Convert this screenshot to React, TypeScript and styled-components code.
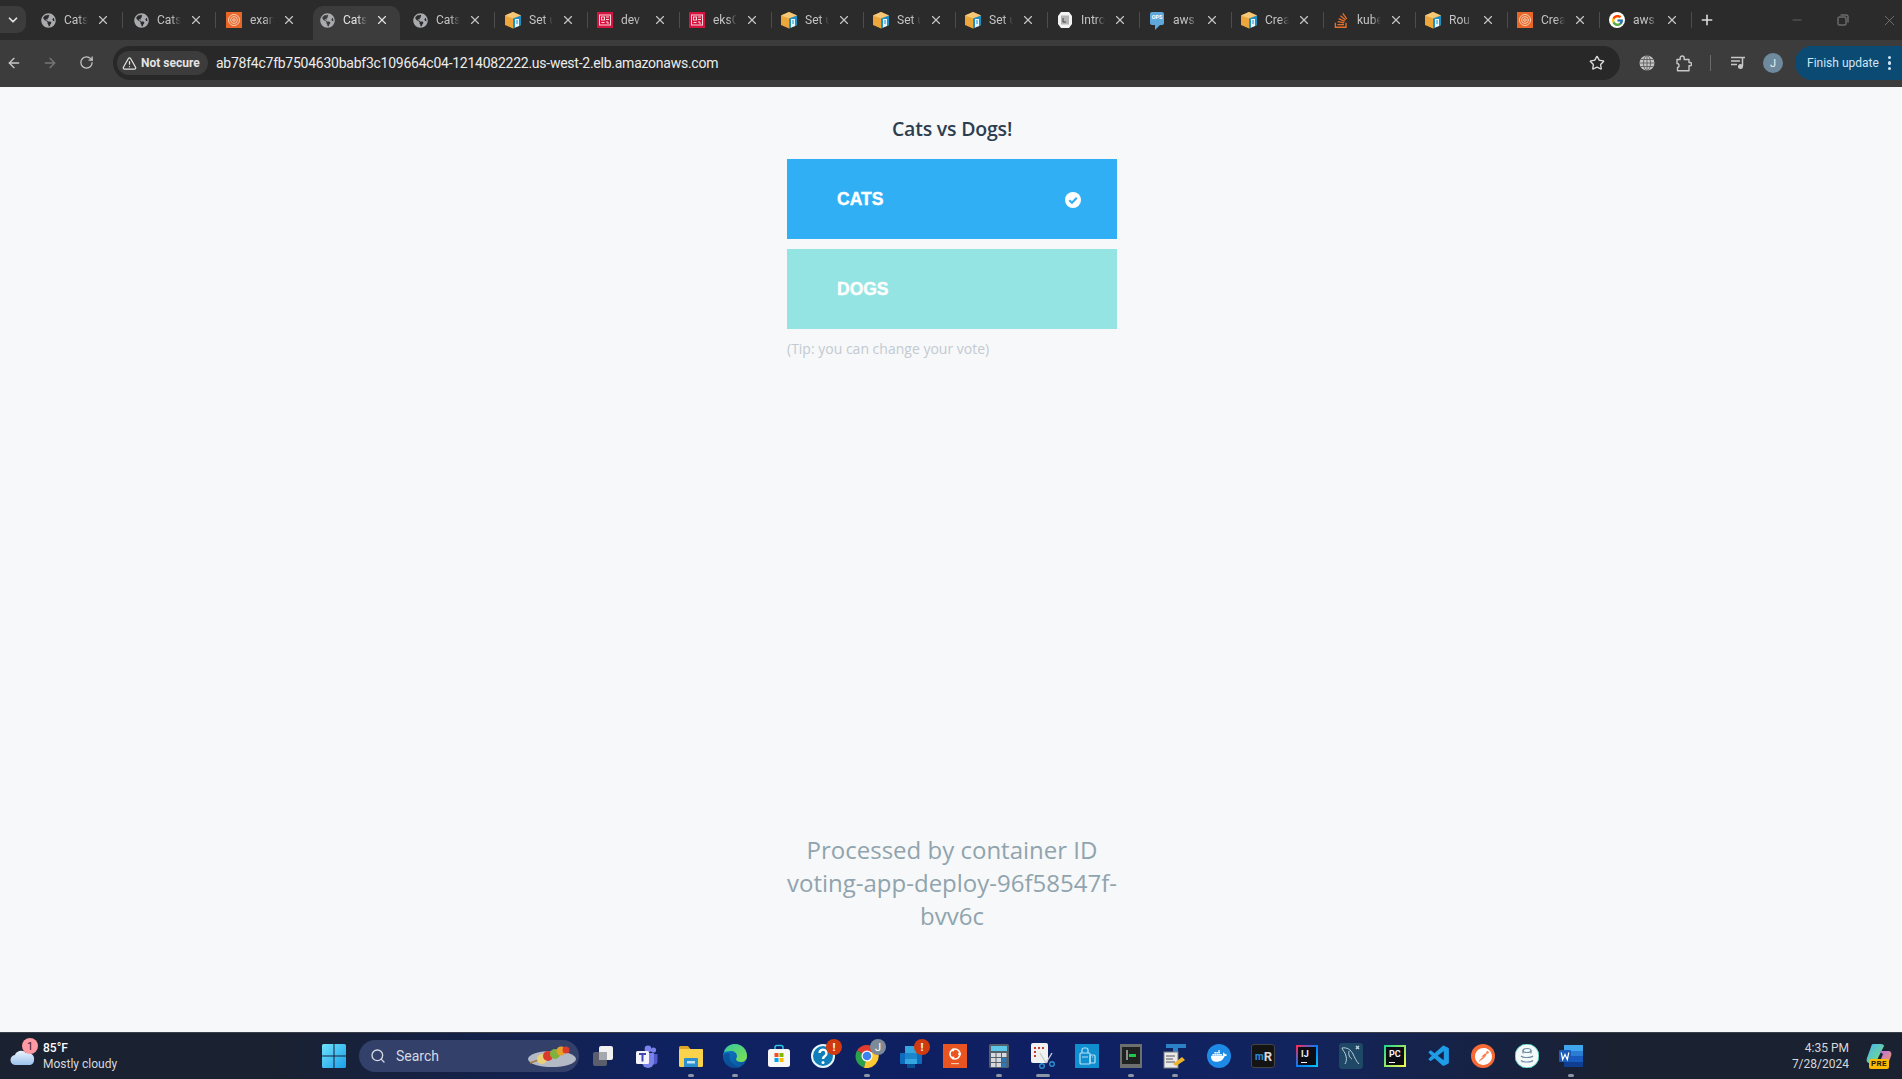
import React from "react";
import styled, { createGlobalStyle } from "styled-components";
import { FaGlobeAmericas, FaStackOverflow } from "react-icons/fa";
import { FcGoogle } from "react-icons/fc";
import { VscVscode } from "react-icons/vsc";
import { SiDocker, SiPostman } from "react-icons/si";
import {
  ArrowLeft, ArrowRight, RotateCw, TriangleAlert, Star, X, Plus, Minus, ChevronDown, Search,
} from "lucide-react";

const Global = createGlobalStyle`
  html, body { margin: 0; padding: 0; height: 100%; overflow: hidden; background: #f7f8f9; }
  #root { height: 1079px; display: flex; flex-direction: column; }
  * { box-sizing: border-box; }
`;

const chromeFont = `Roboto, "Liberation Sans", sans-serif`;
const pageFont = `"Open Sans", "Noto Sans", sans-serif`;

/* ---------- Tab strip ---------- */
const TabStrip = styled.div`
  height: 40px; background: #2b2b2b; display: flex; align-items: flex-start;
  font-family: ${chromeFont}; flex: none; position: relative;
`;
const TabSearch = styled.div`
  width: 26px; height: 27px; margin-top: 6px; margin-right: 8px; background: #3c3c3c;
  border-radius: 0 9px 9px 0; display: flex; align-items: center; justify-content: center; color: #e6e6e6; flex: none;
`;
const Tab = styled.div<{ $active?: boolean; $sep?: boolean }>`
  width: 92px; height: 34px; margin-top: 6px; position: relative; flex: none;
  display: flex; align-items: center; padding: 0 0 6px 6px; color: ${(p) => (p.$active ? "#e3e3e3" : "#c4c4c4")};
  &:nth-child(-n+6) { width: 93px; }
  ${(p) => p.$active && `&::before { content: ""; position: absolute; left: 0; top: 0; width: 87px; height: 34px; background: #3c3c3c; border-radius: 10px 10px 0 0; }`}
  ${(p) => p.$sep && `&::after { content: ""; position: absolute; left: 88px; top: 6px; width: 1px; height: 16px; background: #4d4d4d; }`}
`;
const Fav = styled.div`
  width: 16px; height: 16px; flex: none; position: relative; display: flex; align-items: center; justify-content: center; color: #a9abae;
`;
const TabTitle = styled.div`
  width: 24px; margin-left: 8px; font-size: 12px; white-space: nowrap; overflow: hidden; position: relative; flex: none;
  mask-image: linear-gradient(90deg, #000 60%, transparent 100%);
`;
const TabClose = styled.div`
  margin-left: 6.5px; width: 16px; height: 16px; display: flex; align-items: center; justify-content: center; position: relative; flex: none;
`;
const NewTab = styled.div`
  width: 24px; height: 24px; margin-top: 8px; color: #dcdcdc; display: flex; align-items: center; justify-content: center; flex: none;
`;
const WindowControls = styled.div`
  margin-left: auto; display: flex; gap: 20px; height: 40px; color: #8a8a8a; flex: none;
`;
const WinButton = styled.div`
  width: 26px; height: 40px; display: flex; align-items: center; justify-content: center;
`;

/* ---------- Toolbar ---------- */
const Toolbar = styled.div`
  height: 47px; background: #3c3c3c; display: flex; align-items: center; padding: 0 0 1px 0; flex: none; font-family: ${chromeFont};
`;
const NavButton = styled.div<{ $dim?: boolean }>`
  width: 36px; display: flex; justify-content: center; color: ${(p) => (p.$dim ? "#777" : "#c7c7c7")}; flex: none;
`;
const NavGroup = styled.div`
  display: flex; width: 113px; margin-left: -4px; flex: none;
`;
const Omnibox = styled.div`
  width: 1507px; height: 34px; margin-left: 4px; background: #282828; border-radius: 17px; display: flex; align-items: center; padding: 0 4px; flex: none;
`;
const SecurePill = styled.div`
  width: 91px; height: 24px; border-radius: 12px; background: #3c3c3c; display: flex; align-items: center; gap: 4px; padding-left: 5px;
  font-size: 12px; font-weight: 700; color: #e3e3e3; white-space: nowrap; flex: none;
`;
const UrlText = styled.div`
  margin-left: 8px; font-size: 14px; color: #ececec; white-space: nowrap; letter-spacing: -0.25px;
`;
const OmniEnd = styled.div`
  margin-left: auto; margin-right: 11px; color: #dcdcdc; display: flex;
`;
const ToolIcons = styled.div`
  flex: 1; display: flex; align-items: center; padding-left: 18px; min-width: 0;
`;
const ToolSlot = styled.div<{ $w: number; $ml?: number }>`
  width: ${(p) => p.$w}px; margin-left: ${(p) => p.$ml ?? 0}px; display: flex; justify-content: center; align-items: center; flex: none; color: #c7c7c7;
`;
const ToolDivider = styled.div`
  width: 1px; height: 16px; background: #6a6a6a; flex: none;
`;
const Avatar = styled.div`
  width: 20px; height: 20px; border-radius: 50%; background: #6f8a9c; color: #e8eef1; font-size: 11px; display: flex; align-items: center; justify-content: center;
`;
const UpdatePill = styled.div`
  margin-left: auto; width: 107px; height: 34px; background: #0a4a73; border-radius: 17px 0 0 17px; color: #cfe6f7; font-size: 12px;
  display: flex; align-items: center; padding-left: 12px; white-space: nowrap; flex: none;
`;
const Kebab = styled.div`
  margin-left: 9px; display: flex; flex-direction: column; gap: 2px;
  i { width: 3.5px; height: 3.5px; border-radius: 50%; background: #cfe6f7; display: block; }
`;

/* ---------- Page ---------- */
const Page = styled.main`
  flex: 1; min-height: 0; background: #f7f8f9; display: flex; flex-direction: column; align-items: center; padding-left: 2px; font-family: ${pageFont};
`;
const Column = styled.div`
  width: 330px; display: flex; flex-direction: column;
`;
const Title = styled.h3`
  margin: 28px 0 0; height: 27px; line-height: 27px; text-align: center; font-size: 19.5px; font-weight: 600; color: #2c3e50; letter-spacing: -0.2px;
`;
const VoteList = styled.div`
  margin-top: 17px; display: flex; flex-direction: column; gap: 10px;
`;
const VoteButton = styled.div<{ $bg: string }>`
  height: 80px; background: ${(p) => p.$bg}; color: #fff; display: flex; align-items: center; padding: 0 36px 0 50px;
  font-family: "Liberation Sans", Arial, sans-serif; font-size: 17.5px; font-weight: 700; -webkit-text-stroke: 0.4px #fff; justify-content: space-between;
`;
const Check = styled.svg`
  width: 16px; height: 16px; margin-top: 2px; flex: none;
`;
const Tip = styled.p`
  margin: 10px 0 0; font-size: 14px; line-height: 20px; color: #c3cad1;
`;
const Footer = styled.div`
  margin-top: 474px; text-align: center; font-size: 24px; line-height: 33px; color: #90a4ae; font-weight: 400;
`;

/* ---------- Taskbar ---------- */
const Taskbar = styled.footer`
  height: 47px; flex: none; display: flex; align-items: center; border-top: 1px solid #3a3f4a; position: relative;
  background: linear-gradient(90deg, #1a2130 0%, #1a2130 14%, #0f2260 35%, #0f1f63 55%, #12245e 68%, #1a2130 85%, #1a2130 100%);
  font-family: ${chromeFont};
`;
const Weather = styled.div`
  width: 322px; padding-left: 10px; display: flex; align-items: center; flex: none; position: relative; height: 100%;
`;
const WeatherText = styled.div`
  margin-left: 7px; font-size: 12px; line-height: 16px; color: #d6d8dc;
  b { display: block; font-weight: 500; color: #fff; }
`;
const WeatherBadge = styled.div`
  position: absolute; left: 22px; top: 5px; width: 16px; height: 16px; border-radius: 50%; background: #ff9aa2; color: #40161a; font-size: 11px;
  display: flex; align-items: center; justify-content: center;
`;
const SearchBox = styled.div`
  width: 220px; height: 32px; margin-left: 13px; border-radius: 16px; background: #33406a; display: flex; align-items: center; padding-left: 11px; gap: 10px;
  color: #d5d9e2; font-size: 14px; position: relative; flex: none;
`;
const SearchArt = styled.svg`
  position: absolute; right: 3px; top: 3px;
`;
const TaskIcons = styled.div`
  display: flex; margin-left: 2px; flex: none;
`;
const TaskSlot = styled.div`
  width: 44px; height: 44px; display: flex; align-items: center; justify-content: center; position: relative; flex: none;
`;
const RunDot = styled.span<{ $wide?: boolean }>`
  position: absolute; bottom: 1px; left: 50%; width: ${(p) => (p.$wide ? 14 : 6)}px; height: 3px; margin-left: ${(p) => (p.$wide ? -7 : -3)}px; border-radius: 2px; background: #8d94a6;
`;
const TaskBadge = styled.span<{ $grey?: boolean }>`
  position: absolute; right: 3px; top: 5px; width: 16px; height: 16px; border-radius: 50%; background: ${(p) => (p.$grey ? "#7d8b98" : "#d13a0e")};
  color: #fff; font-size: 11px; font-weight: ${(p) => (p.$grey ? 400 : 700)}; display: flex; align-items: center; justify-content: center;
`;
const Clock = styled.div`
  margin-left: auto; text-align: right; font-size: 12px; line-height: 16px; color: #d6d8dc; flex: none;
`;
const CopilotSlot = styled.div`
  width: 53px; display: flex; justify-content: center; flex: none; position: relative; padding-left: 8px;
`;

/* ---------- Favicons ---------- */
const BoxIcon = () => (
  <svg width="16" height="18" viewBox="0 0 16 18">
    <path d="M0 4.5 8 1l8 3.5v9.5L8 17.5 0 14z" fill="#eda63a" />
    <path d="M0 4.5 8 1l8 3.5-8 3z" fill="#f6c777" />
    <path d="M8 7.5l8-3V14l-8 3.5z" fill="#1f8fc4" />
    <path d="M10 8h4v7l-4 1.5z" fill="#e8f4fb" />
    <path d="M11 10h2M11 12h2" stroke="#1f8fc4" />
  </svg>
);
const OrangeIcon = () => (
  <svg width="16" height="16" viewBox="0 0 16 16">
    <rect width="16" height="16" fill="#e8662a" />
    <g fill="none" stroke="#f8d3b5" strokeWidth="1">
      <circle cx="8" cy="8" r="5.5" /><circle cx="8" cy="8" r="3.4" /><circle cx="8" cy="8" r="1.3" />
    </g>
  </svg>
);
const RedIcon = () => (
  <svg width="16" height="16" viewBox="0 0 16 16">
    <rect width="16" height="16" fill="#d6123f" />
    <g fill="none" stroke="#fbd5dc" strokeWidth="1">
      <rect x="2.5" y="3" width="11" height="10" /><rect x="4.5" y="5" width="3" height="3" /><path d="M9 5h3M9 7.5h3M4.5 10.5h3M9 10h2v2" />
    </g>
  </svg>
);
const IntroIcon = () => (
  <svg width="16" height="16" viewBox="0 0 16 16">
    <path d="M4 0h8l3 4v8l-3 4H4l-3-4V4z" fill="#f2f2f2" />
    <rect x="4" y="3.5" width="8" height="9" fill="#b4b4b4" /><path d="M6 6v4h3" stroke="#444" fill="none" />
  </svg>
);
const OpsMark = styled.div`
  width: 14px; height: 13px; margin-top: -3px; background: #5fa8dc; border-radius: 2px; position: relative; color: #fff; font-size: 5.5px; font-weight: 700; text-align: center; line-height: 11px;
  &::after { content: ""; position: absolute; left: 5px; bottom: -5px; border: 3px solid transparent; border-top-color: #5fa8dc; border-left-color: #5fa8dc; }
`;
const GoogleWrap = styled.div`
  width: 16px; height: 16px; border-radius: 50%; background: #fff; display: flex; align-items: center; justify-content: center;
`;
const globe = <FaGlobeAmericas size={15} />;
const tabs: { t: string; i: React.ReactNode; active?: boolean; sep?: boolean }[] = [
  { t: "Cats", i: globe, sep: true },
  { t: "Cats", i: globe, sep: true },
  { t: "exam", i: <OrangeIcon /> },
  { t: "Cats", i: globe, active: true },
  { t: "Cats", i: globe, sep: true },
  { t: "Set up", i: <BoxIcon />, sep: true },
  { t: "dev", i: <RedIcon />, sep: true },
  { t: "eksC", i: <RedIcon />, sep: true },
  { t: "Set up", i: <BoxIcon />, sep: true },
  { t: "Set up", i: <BoxIcon />, sep: true },
  { t: "Set up", i: <BoxIcon />, sep: true },
  { t: "Intro", i: <IntroIcon />, sep: true },
  { t: "aws", i: <OpsMark>OPS</OpsMark>, sep: true },
  { t: "Crea", i: <BoxIcon />, sep: true },
  { t: "kube", i: <FaStackOverflow size={17} color="#e8702a" />, sep: true },
  { t: "Rou", i: <BoxIcon />, sep: true },
  { t: "Crea", i: <OrangeIcon />, sep: true },
  { t: "aws", i: <GoogleWrap><FcGoogle size={13} /></GoogleWrap>, sep: true },
];

/* ---------- Taskbar icons ---------- */
const TaskView = () => (
  <svg width="24" height="24" viewBox="0 0 24 24">
    <rect x="2" y="8" width="14" height="14" rx="2" fill="#5a5f6b" />
    <rect x="8" y="2" width="14" height="14" rx="2" fill="#f1f1f1" />
    <path d="M8 8h8v8H8z" fill="#a5a8ae" />
  </svg>
);
const Teams = () => (
  <svg width="24" height="24" viewBox="0 0 24 24">
    <circle cx="18.5" cy="6" r="2.6" fill="#7b83eb" /><circle cx="13" cy="5" r="3.4" fill="#7b83eb" />
    <path d="M15 10h7.5v7a3.5 3.5 0 0 1-7 0z" fill="#5059c9" /><path d="M7 9h12v9a6 6 0 0 1-12 0z" fill="#7b83eb" />
    <rect x="1" y="7" width="13" height="13" rx="1.5" fill="#f4f5fb" />
    <path d="M4 10h7M7.500 10v7.500" stroke="#3f47b5" strokeWidth="2" />
  </svg>
);
const Explorer = () => (
  <svg width="24" height="24" viewBox="0 0 24 24">
    <path d="M0 3.500A1.500 1.500 0 0 1 1.500 2H9l2.500 3H24v3H0z" fill="#e0a526" />
    <rect y="5" width="24" height="18" rx="1.500" fill="#fbd24c" />
    <path d="M6 14h12a1 1 0 0 1 1 1v8H5v-8a1 1 0 0 1 1-1z" fill="#2b8fd0" />
    <rect x="8" y="17" width="8" height="2.500" fill="#bfe4f7" />
  </svg>
);
const Edge = () => (
  <svg width="24" height="24" viewBox="0 0 24 24">
    <defs>
      <linearGradient id="edgeA" x1="0" y1="0" x2="1" y2="1"><stop offset="0" stopColor="#36c9a0" /><stop offset="1" stopColor="#7fe04f" /></linearGradient>
      <linearGradient id="edgeB" x1="0" y1="0" x2="1" y2="1"><stop offset="0" stopColor="#0e7fd0" /><stop offset="1" stopColor="#0b4f97" /></linearGradient>
    </defs>
    <circle cx="12" cy="12" r="12" fill="url(#edgeB)" />
    <path d="M1 8C3 2 8 0 12 0c6.500 0 12 5 12 12 0 4-3 6-6 6-2.500 0-5-1-5-3 0-1 1-1 1-3 0-3-3-5-6-5-3.500 0-6 1-7 1z" fill="url(#edgeA)" />
    <path d="M7 10c-2 4 1 10 8 13-1 .5-2 1-3 1C5 24 0 18 0 12c2-3 5-4 7-2z" fill="#0a3f86" opacity=".55" />
  </svg>
);
const Store = () => (
  <svg width="24" height="24" viewBox="0 0 24 24">
    <path d="M8 6V3.500A2 2 0 0 1 10 1.500h4a2 2 0 0 1 2 2V6" fill="none" stroke="#2fc4e6" strokeWidth="1.500" />
    <rect x="1" y="5" width="22" height="18" rx="2.500" fill="#f7f7f7" />
    <rect x="7.500" y="9" width="4" height="4" fill="#f25022" /><rect x="12.500" y="9" width="4" height="4" fill="#7fba00" />
    <rect x="7.500" y="14" width="4" height="4" fill="#00a4ef" /><rect x="12.500" y="14" width="4" height="4" fill="#ffb900" />
  </svg>
);
const Help = () => (
  <svg width="24" height="24" viewBox="0 0 24 24">
    <circle cx="12" cy="12" r="11" fill="#0e7fb8" stroke="#e8f5fb" strokeWidth="2" />
    <path d="M8.500 9a3.500 3.500 0 1 1 5.500 3c-1.500 1-2 1.500-2 3" fill="none" stroke="#fff" strokeWidth="2.400" />
    <circle cx="12" cy="18.500" r="1.500" fill="#fff" />
  </svg>
);
const Chrome = () => (
  <svg width="24" height="24" viewBox="0 0 24 24">
    <path d="M12 12 2 6.500A12 12 0 0 1 23 8H12z" fill="#e33b2e" />
    <path d="M12 12 2 6.500A12 12 0 0 0 9 23.700z" fill="#2ba14b" />
    <path d="M12 12 9 23.700A12 12 0 0 0 23 8H12z" fill="#fcc934" />
    <circle cx="12" cy="12" r="5.500" fill="#fff" /><circle cx="12" cy="12" r="4.300" fill="#3c82f0" />
  </svg>
);
const Phone = () => (
  <svg width="24" height="24" viewBox="0 0 24 24">
    <rect x="1" y="9" width="22" height="11" rx="1" fill="#0f6cbd" />
    <rect x="6" y="2" width="12" height="18" fill="#34a6e0" />
    <rect x="6" y="9" width="12" height="6" fill="#1b86cc" />
    <rect x="8" y="20" width="8" height="4" fill="#0b4f97" />
  </svg>
);
const Ubuntu = () => (
  <svg width="24" height="24" viewBox="0 0 24 24">
    <rect width="24" height="24" fill="#e95420" />
    <circle cx="12" cy="10" r="5" fill="none" stroke="#fff" strokeWidth="1.600" />
    <circle cx="16.500" cy="10" r="1.400" fill="#fff" /><circle cx="10" cy="6" r="1.400" fill="#fff" /><circle cx="10" cy="14" r="1.400" fill="#fff" />
    <rect x="8" y="19" width="8" height="1.200" fill="#f8c7b2" />
  </svg>
);
const Calc = () => (
  <svg width="20" height="24" viewBox="0 0 20 24">
    <rect width="20" height="24" rx="1.500" fill="#54606c" />
    <rect x="2" y="2" width="16" height="5" fill="#5ec6e8" />
    {[0, 1, 2].map((r) => [0, 1, 2].map((c) => (
      <rect key={`${r}${c}`} x={2 + c * 5.500} y={9 + r * 5} width="4.500" height="4" fill={c === 2 && r > 0 ? "#2d78b8" : "#d8dadd"} />
    )))}
  </svg>
);
const Snip = () => (
  <svg width="26" height="26" viewBox="0 0 26 26">
    <rect x="1" y="0" width="17" height="20" rx="2" fill="#f1f1f1" />
    <path d="M4 4h2v2H4zM8 4h2v2H8zM12 4h2v2h-2zM4 8h2v2H4zM4 12h2v2H4z" fill="#cc3b2a" />
    <path d="M10 10l6 10M22 10l-6 10" stroke="#c9ccd0" strokeWidth="1.400" />
    <circle cx="12" cy="23" r="2.300" fill="none" stroke="#2b8fd0" strokeWidth="1.400" /><circle cx="22" cy="21" r="2.300" fill="none" stroke="#2b8fd0" strokeWidth="1.400" />
  </svg>
);
const Workspace = () => (
  <svg width="24" height="24" viewBox="0 0 24 24">
    <rect width="24" height="24" fill="#0f8fd0" />
    <g fill="none" stroke="#b5e2f6" strokeWidth="1.200"><rect x="5" y="9" width="10" height="11" rx="1" /><rect x="15" y="11" width="5" height="8" rx="1" /><path d="M7 9V6a2 2 0 0 1 2-2h2a2 2 0 0 1 2 2v3M7 13h6M17 13h1" /></g>
  </svg>
);
const Term = () => (
  <svg width="22" height="24" viewBox="0 0 22 24">
    <rect width="22" height="24" fill="#6e6f6f" />
    <rect x="2" y="3" width="18" height="17" fill="#1e2220" />
    <path d="M7 6v10" stroke="#8a8f8c" strokeWidth="2" /><path d="M9 10h7v3H9z" fill="#1fc84a" />
  </svg>
);
const TypeTool = () => (
  <svg width="24" height="26" viewBox="0 0 24 26">
    <path d="M3 1h20v4H15v20h-5V5H3z" fill="#2b82c8" />
    <rect x="1" y="9" width="14" height="16" fill="#e9e9e9" stroke="#7a7a7a" />
    <path d="M3 13h9M3 16h7M3 19h9" stroke="#555" />
    <path d="M10 21l9-7 3 3-9 6z" fill="#f0b429" />
  </svg>
);
const DockerIcon = () => (
  <svg width="24" height="24" viewBox="0 0 24 24">
    <circle cx="12" cy="12" r="12" fill="#1d8ae6" />
    <foreignObject x="4" y="4" width="16" height="16"><SiDocker size={16} color="#fff" /></foreignObject>
  </svg>
);
const MR = styled.div`
  width: 24px; height: 24px; border-radius: 3px; background: #141414; border: 1px solid #444; color: #d9d9d9; font-size: 13px; font-weight: 700;
  display: flex; align-items: center; justify-content: center; letter-spacing: -1px;
  span { color: #2a8fe0; font-size: 10px; margin-right: 1px; }
`;
const JetBrains = styled.div<{ $border: string }>`
  width: 22px; height: 22px; background: #0c0c14; border: 2px solid; border-image: ${(p) => p.$border} 1; color: #f2f2f2; font-size: 9px; font-weight: 700;
  line-height: 10px; padding: 2px 0 0 3px; position: relative;
  &::after { content: ""; position: absolute; left: 3px; bottom: 2px; width: 6px; height: 1.500px; background: #f2f2f2; }
`;
const Dolphin = () => (
  <svg width="24" height="26" viewBox="0 0 24 26">
    <rect width="24" height="26" rx="3" fill="#1f4766" />
    <g fill="none" stroke="#b9cfdc" strokeWidth="1">
      <path d="M3 5c5-1 9 2 11 6s3 7 6 10" />
      <path d="M3 5c1 3 3 4 4 8s0 6-1 8" />
      <path d="M10 8c-1 4 1 7 3 8" />
      <path d="M17 3l3 3M20 3l-3 3" strokeWidth="1.600" />
    </g>
  </svg>
);
const VsWrap = styled.div`
  color: #1f9ce8; display: flex;
`;
const PostmanWrap = styled.div`
  width: 24px; height: 24px; border-radius: 50%; background: #f76935; display: flex; align-items: center; justify-content: center; color: #fff;
`;
const Tool = () => (
  <svg width="24" height="24" viewBox="0 0 24 24">
    <circle cx="12" cy="12" r="12" fill="#f4faf8" stroke="#49c4b0" />
    <g fill="none" stroke="#6e8ca8" strokeWidth="1.200">
      <ellipse cx="12" cy="6.500" rx="4" ry="2" /><path d="M6 12c2 2 10 2 12 0M6 16.500c2 2 10 2 12 0M8 6.500v3M16 6.500v3" />
    </g>
  </svg>
);
const Word = () => (
  <svg width="24" height="24" viewBox="0 0 24 24">
    <rect x="5" y="1" width="19" height="22" rx="1" fill="#2b7cd3" />
    <rect x="5" y="1" width="19" height="6" fill="#41a5ee" /><rect x="5" y="12" width="19" height="6" fill="#185abd" /><rect x="5" y="18" width="19" height="5" fill="#103f91" />
    <rect x="0" y="6" width="12" height="12" rx="1" fill="#1a5bb8" />
    <path d="M2.200 8.500l1.500 7 2.300-5 2.300 5 1.500-7" fill="none" stroke="#fff" strokeWidth="1.200" />
  </svg>
);
const Copilot = () => (
  <svg width="30" height="30" viewBox="0 0 30 30">
    <defs>
      <linearGradient id="coA" x1="0" y1="0" x2="1" y2="1"><stop offset="0" stopColor="#46b5f0" /><stop offset="1" stopColor="#7be07a" /></linearGradient>
      <linearGradient id="coB" x1="0" y1="0" x2="1" y2="1"><stop offset="0" stopColor="#b56cf0" /><stop offset="1" stopColor="#f0a05a" /></linearGradient>
    </defs>
    <path d="M8 3h8c2 0 3 1 3 2l-7 14c-.8 2-2 3-4 3H5c-3 0-4-2-3-5L6 6c.5-2 1-3 2-3z" fill="url(#coA)" />
    <path d="M14 10h9c3 0 4 2 3 5l-3 8H14l4-10z" fill="url(#coB)" />
  </svg>
);
const PreTag = styled.span`
  position: absolute; left: 20px; top: 18px; background: #ffb900; color: #221a00; font-size: 8px; font-weight: 700; padding: 0 2px; border-radius: 2px; line-height: 10px; letter-spacing: .4px;
`;

const taskItems: { n: React.ReactNode; run?: boolean; wide?: boolean; badge?: string; grey?: boolean }[] = [
  { n: <TaskView /> },
  { n: <Teams /> },
  { n: <Explorer />, run: true },
  { n: <Edge />, run: true },
  { n: <Store /> },
  { n: <Help />, badge: "!" },
  { n: <Chrome />, run: true, badge: "J", grey: true },
  { n: <Phone />, badge: "!" },
  { n: <Ubuntu /> },
  { n: <Calc />, run: true },
  { n: <Snip />, run: true, wide: true },
  { n: <Workspace /> },
  { n: <Term />, run: true },
  { n: <TypeTool />, run: true },
  { n: <DockerIcon /> },
  { n: <MR><span>m</span>R</MR> },
  { n: <JetBrains $border="linear-gradient(135deg,#fe2857,#087cfa,#07c3f2)">IJ</JetBrains> },
  { n: <Dolphin /> },
  { n: <JetBrains $border="linear-gradient(135deg,#21d789,#fcf84a)">PC</JetBrains> },
  { n: <VsWrap><VscVscode size={25} /></VsWrap> },
  { n: <PostmanWrap><SiPostman size={17} /></PostmanWrap> },
  { n: <Tool /> },
  { n: <Word />, run: true },
];

const GlobeTool = () => (
  <svg width="16" height="16" viewBox="0 0 16 16">
    <circle cx="8" cy="8" r="7.500" fill="#c4c4c4" />
    <g fill="none" stroke="#555" strokeWidth=".8"><ellipse cx="8" cy="8" rx="3.500" ry="7.500" /><path d="M.5 8h15M1.500 4.500h13M1.500 11.500h13M8 .5v15" /></g>
  </svg>
);
const Extensions = () => (
  <svg width="17" height="17" viewBox="0 0 17 17" fill="none" stroke="#c7c7c7" strokeWidth="1.400" strokeLinejoin="round">
    <path d="M2 4.500h3.200V3a2 2 0 0 1 4 0v1.500H14V7.500h1a1.600 1.600 0 0 1 0 3.200h-1v5H2.500V12.500c1.500 0 1.500-1.200 1.500-2s-.5-2-2-2z" />
  </svg>
);
const MediaIcon = () => (
  <svg width="16" height="16" viewBox="0 0 16 16">
    <path d="M1 2.500h11M1 6h9M1 9.500h6" stroke="#c7c7c7" strokeWidth="1.400" fill="none" />
    <path d="M12.500 2.500H15M12.500 2v9" stroke="#c7c7c7" strokeWidth="1.500" />
    <circle cx="10.500" cy="11.500" r="2.500" fill="#c7c7c7" />
  </svg>
);

export default function App() {
  return (
    <>
      <Global />
      <TabStrip>
        <TabSearch><ChevronDown size={14} strokeWidth={3} /></TabSearch>
        {tabs.map((t, i) => (
          <Tab key={i} $active={t.active} $sep={t.sep}>
            <Fav>{t.i}</Fav>
            <TabTitle>{t.t}</TabTitle>
            <TabClose><X size={14} strokeWidth={2} /></TabClose>
          </Tab>
        ))}
        <NewTab><Plus size={16} strokeWidth={2.4} /></NewTab>
        <WindowControls>
          <WinButton><Minus size={14} strokeWidth={1} /></WinButton>
          <WinButton>
            <svg width="12" height="12" viewBox="0 0 12 12" fill="none" stroke="#8a8a8a"><rect x="1" y="3" width="8" height="8" rx="1" /><path d="M3.500 1H10a1 1 0 0 1 1 1v6.500" /></svg>
          </WinButton>
          <WinButton><X size={17} strokeWidth={1} /></WinButton>
        </WindowControls>
      </TabStrip>
      <Toolbar>
        <NavGroup>
          <NavButton><ArrowLeft size={16} strokeWidth={2} /></NavButton>
          <NavButton $dim><ArrowRight size={16} strokeWidth={2} /></NavButton>
          <NavButton><RotateCw size={15} strokeWidth={2} /></NavButton>
        </NavGroup>
        <Omnibox>
          <SecurePill><TriangleAlert size={15} strokeWidth={2} />Not secure</SecurePill>
          <UrlText>ab78f4c7fb7504630babf3c109664c04-1214082222.us-west-2.elb.amazonaws.com</UrlText>
          <OmniEnd><Star size={16} strokeWidth={2} /></OmniEnd>
        </Omnibox>
        <ToolIcons>
          <ToolSlot $w={18}><GlobeTool /></ToolSlot>
          <ToolSlot $w={19} $ml={18}><Extensions /></ToolSlot>
          <ToolSlot $w={26} $ml={4}><ToolDivider /></ToolSlot>
          <ToolSlot $w={28} $ml={1}><MediaIcon /></ToolSlot>
          <ToolSlot $w={44} $ml={-1}><Avatar>J</Avatar></ToolSlot>
          <UpdatePill>Finish update<Kebab><i /><i /><i /></Kebab></UpdatePill>
        </ToolIcons>
      </Toolbar>
      <Page>
        <Column>
          <Title>Cats vs Dogs!</Title>
          <VoteList>
            <VoteButton $bg="#30aff4">
              CATS
              <Check viewBox="0 0 16 16"><circle cx="8" cy="8" r="8" fill="#fff" /><path d="M4.300 8.200 7 10.800l4.800-5" fill="none" stroke="#30aff4" strokeWidth="2.200" /></Check>
            </VoteButton>
            <VoteButton $bg="#94e4e3">DOGS</VoteButton>
          </VoteList>
          <Tip>(Tip: you can change your vote)</Tip>
          <Footer>Processed by container ID voting-app-deploy-96f58547f-bvv6c</Footer>
        </Column>
      </Page>
      <Taskbar>
        <Weather>
          <svg width="26" height="20" viewBox="0 0 26 20">
            <defs><linearGradient id="cloud" x1="0" y1="0" x2="0" y2="1"><stop offset="0" stopColor="#eaf3fd" /><stop offset="1" stopColor="#9cc2ec" /></linearGradient></defs>
            <circle cx="19" cy="3" r="3" fill="#e8802a" />
            <path d="M6 19a5 5 0 0 1-1-10c1-4 8-6 11-2 4-1 9 2 8 7 0 3-2 5-5 5z" fill="url(#cloud)" />
          </svg>
          <WeatherBadge>1</WeatherBadge>
          <WeatherText><b>85°F</b>Mostly cloudy</WeatherText>
        </Weather>
        <svg width="24" height="24" viewBox="0 0 24 24">
          <defs><linearGradient id="win" x1="0" y1="0" x2="1" y2="1"><stop offset="0" stopColor="#6fe0fb" /><stop offset="1" stopColor="#1a9fe8" /></linearGradient></defs>
          <path d="M0 1.500A1.500 1.500 0 0 1 1.500 0h10v11.500H0zM12.500 0h10A1.500 1.500 0 0 1 24 1.500v10H12.500zM0 12.500h11.500V24h-10A1.500 1.500 0 0 1 0 22.500zM12.500 12.500H24v10a1.500 1.500 0 0 1-1.500 1.500h-10z" fill="url(#win)" />
        </svg>
        <SearchBox>
          <Search size={16} strokeWidth={2} />Search
          <SearchArt width="50" height="26" viewBox="0 0 50 26">
            <ellipse cx="26" cy="16" rx="24" ry="8" fill="#b4b9c6" />
            <path d="M4 20 42 6" stroke="#a57b3f" strokeWidth="1.500" />
            <circle cx="16" cy="16" r="5" fill="#e7d27a" /><circle cx="22" cy="13" r="5" fill="#d93a2b" /><circle cx="29" cy="11" r="5" fill="#7fb23c" /><circle cx="35" cy="8" r="4.500" fill="#e9a02b" /><circle cx="40" cy="7" r="3.500" fill="#d93a2b" />
          </SearchArt>
        </SearchBox>
        <TaskIcons>
          {taskItems.map((it, i) => (
            <TaskSlot key={i}>
              {it.n}
              {it.badge && <TaskBadge $grey={it.grey}>{it.badge}</TaskBadge>}
              {it.run && <RunDot $wide={it.wide} />}
            </TaskSlot>
          ))}
        </TaskIcons>
        <Clock>4:35 PM<br />7/28/2024</Clock>
        <CopilotSlot><Copilot /><PreTag>PRE</PreTag></CopilotSlot>
      </Taskbar>
    </>
  );
}
